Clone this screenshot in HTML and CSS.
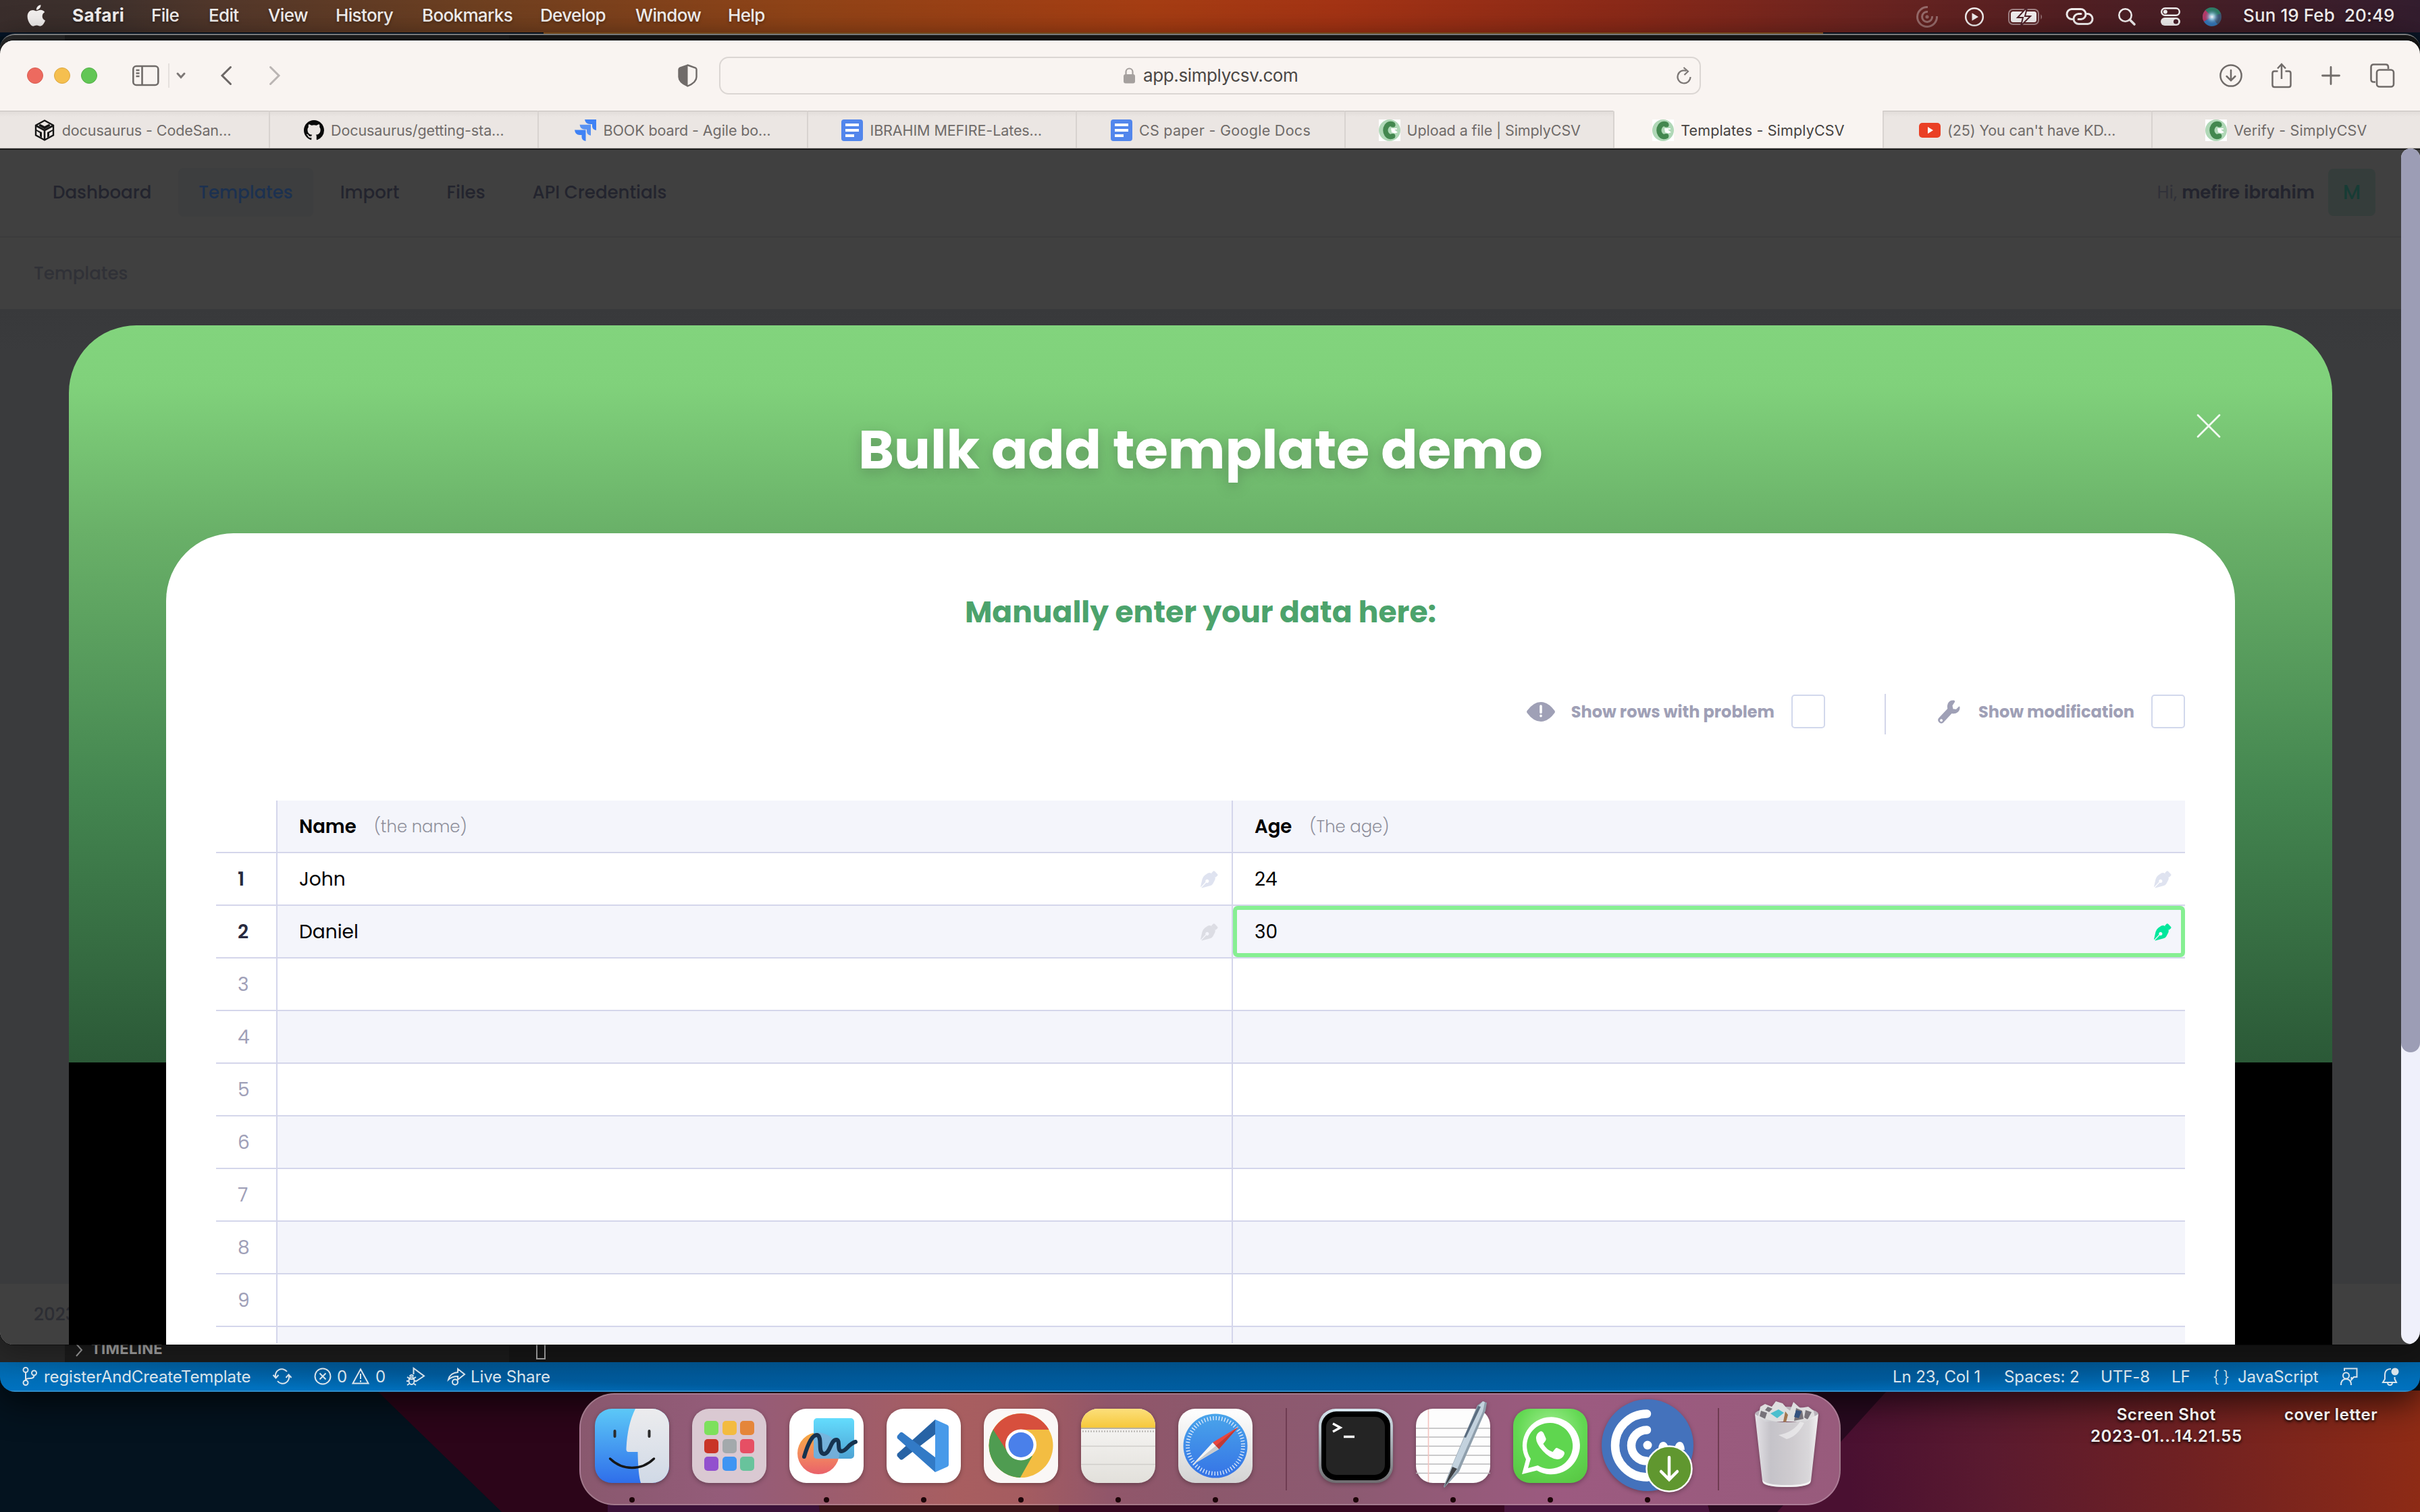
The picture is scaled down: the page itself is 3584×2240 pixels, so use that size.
FILE: index.html
```html
<!DOCTYPE html>
<html lang="en">
<head>
<meta charset="utf-8">
<title>Templates - SimplyCSV</title>
<link rel="stylesheet" href="styles.css">
</head>
<body>
<svg class="defs" aria-hidden="true">
  <defs>
    <symbol id="pen" viewBox="0 0 26 26"><path fill="currentColor" fill-rule="evenodd" d="M0 23.600 2.500 12.500Q3.300 9 6.500 6.500L11 3.500Q14 2.400 16 4L21 9Q22.600 10.800 21.300 13.500L18.300 19.300Q17 21.700 14 22.300L2 25.500 1.400 24.900 8.500 17.600A2.600 2.600 0 1 0 7.500 16.500L.6 23.900Z"/><path fill="currentColor" d="M16.500 3 18.600.7Q19.700-.2 21 .8L25 5Q26 6.200 25 7.300L22.600 9.500Q21.500 10 20.500 9L16.500 5Q15.700 4 16.500 3Z"/></symbol>
    <symbol id="csv" viewBox="0 0 32 32"><path fill="#fff" d="M0 0h32v32H0z"/><circle cx="16" cy="16" r="16" fill="#b0d8b7"/><path d="M21.500 8A7.500 9.500 0 1 0 21.500 24" fill="none" stroke="#43884f" stroke-width="7.500"/><circle cx="21" cy="8" r="3.600" fill="#43884f"/><circle cx="21" cy="24.500" r="3.400" fill="#43884f"/><path d="M18 13h9v1.500l-4 .5 5 4-4 1.500-5-1.500z" fill="#fff"/></symbol>
    <symbol id="gdoc" viewBox="0 0 32 32"><rect width="32" height="32" rx="4" fill="#5286ec"/><path fill="#fff" d="M6 6h20v4H6zM6 14h20v4H6zM6 22h13v4H6z"/></symbol>
    <linearGradient id="lav" x2="0" y2="1"><stop stop-color="#5cc8f7"/><stop offset="1" stop-color="#2f6eea"/></linearGradient>
    <linearGradient id="silver" x2="0" y2="1"><stop stop-color="#ececee"/><stop offset="1" stop-color="#d0d9e6"/></linearGradient>
    <linearGradient id="ff1" x2="0" y2="1"><stop stop-color="#63dcfd"/><stop offset="1" stop-color="#4ea3d4"/></linearGradient>
    <linearGradient id="ff2" x2="0" y2="1"><stop stop-color="#f7ab3f"/><stop offset=".5" stop-color="#f38b5e"/><stop offset="1" stop-color="#e9616a"/></linearGradient>
    <linearGradient id="yel" x2="0" y2="1"><stop stop-color="#fcdf7b"/><stop offset="1" stop-color="#f6c83b"/></linearGradient>
    <linearGradient id="paper" x2="0" y2="1"><stop stop-color="#fbfaf9"/><stop offset="1" stop-color="#e2e0db"/></linearGradient>
    <linearGradient id="white" x2="0" y2="1"><stop stop-color="#fff"/><stop offset="1" stop-color="#d3d3d3"/></linearGradient>
    <linearGradient id="sea" x2="0" y2="1"><stop stop-color="#4aa5ea"/><stop offset="1" stop-color="#3573e6"/></linearGradient>
    <linearGradient id="steel" x2="0" y2="1"><stop stop-color="#d6e6ef"/><stop offset="1" stop-color="#6f6c70"/></linearGradient>
    <radialGradient id="leaf" cx=".5" cy=".3" r=".9"><stop stop-color="#a5ef94"/><stop offset=".5" stop-color="#62d852"/><stop offset="1" stop-color="#55c23f"/></radialGradient>
    <linearGradient id="bin" x2="1"><stop stop-color="#e9e9ec"/><stop offset=".25" stop-color="#c9c9ce"/><stop offset=".6" stop-color="#d3d2d5"/><stop offset=".85" stop-color="#dedee0"/><stop offset="1" stop-color="#f7f7f8"/></linearGradient>
    <radialGradient id="siri" cx=".5" cy=".5" r=".5"><stop stop-color="#fff"/><stop offset=".35" stop-color="#a9d8ee" stop-opacity=".8"/><stop offset="1" stop-color="#4270a4" stop-opacity="0"/></radialGradient>
    <linearGradient id="wpR" gradientUnits="userSpaceOnUse" x1="2740" y1="2200" x2="3584" y2="2130"><stop stop-color="#4a1031"/><stop offset=".25" stop-color="#5a1a2f"/><stop offset=".6" stop-color="#702122"/><stop offset="1" stop-color="#8e2b15"/></linearGradient>
  </defs>
</svg>

<div class="desktop">
  <svg class="wallpaper" viewBox="0 0 3584 2240">
    <rect width="3584" height="2240" fill="#04131f"/>
    <path d="M560 2062H3584V2240H743Z" fill="#2c0519"/>
    <path d="M1212 2225h356v15h-354z" fill="#3b1419"/>
    <path d="M900 2225h312l2 15H900z" fill="#3a1138"/>
    <path d="M1568 2225h660v15h-660z" fill="#35071f"/>
    <path d="M2228 2225h300l4 15h-304z" fill="#48153d"/>
    <path d="M2528 2062h270l-160 178h-106z" fill="#290a20"/>
    <path d="M2795 2060H3584V2240H2632Z" fill="url(#wpR)"/>
    <path d="M0 46h805v8H0z" fill="#051527"/>
    <path d="M805 48H2700v2H805z" fill="#8f5a22"/>
    <path d="M2700 46h884v20h-884z" fill="#0b1626"/>
  </svg>

  <header class="menubar">
    <nav class="menus">
      <svg class="apple" viewBox="0 28 376 456"><path fill="#f2efee" d="M318.700 268.700c-.2-36.700 16.400-64.400 50-84.800-18.800-26.900-47.200-41.700-84.700-44.600-35.500-2.800-74.300 20.700-88.500 20.700-15 0-49.400-19.700-76.400-19.700C63.300 141.200 4 184.800 4 273.500q0 39.300 14.400 81.200c12.800 36.700 59 126.700 107.200 125.200 25.200-.6 43-17.900 75.800-17.900 31.800 0 48.300 17.900 76.400 17.900 48.600-.7 90.400-82.500 102.600-119.300-65.200-30.700-61.700-90-61.700-91.900zm-56.600-164.200c27.300-32.400 24.800-61.900 24-72.500-24.100 1.400-52 16.400-67.900 34.900-17.500 19.800-27.800 44.300-25.600 71.900 26.100 2 49.900-11.400 69.500-34.300z"/></svg>
      <b>Safari</b><span>File</span><span>Edit</span><span>View</span><span>History</span><span>Bookmarks</span><span>Develop</span><span>Window</span><span>Help</span>
    </nav>
    <div class="extras">
      <svg width="32" height="32" viewBox="0 0 32 32" fill="none" stroke="#fff" stroke-opacity=".33" stroke-width="3"><path d="M17 1.500A14.500 14.500 0 1 0 30.500 15"/><path d="M17 8.500A7.500 7.500 0 1 0 23.500 15"/><circle cx="16" cy="16" r="1"/></svg>
      <svg width="28" height="28" viewBox="0 0 28 28"><circle cx="14" cy="14" r="12.800" fill="none" stroke="#f0eded" stroke-width="2.500"/><path d="M10.500 8.300 20 14l-9.500 5.700z" fill="#f0eded"/></svg>
      <svg width="52" height="26" viewBox="0 0 52 26"><rect x="1" y="2" width="44" height="22" rx="6" fill="none" stroke="#a08083" stroke-width="2"/><rect x="4" y="5" width="38" height="16" rx="3.500" fill="#f0eded"/><path d="M48.500 9q3 4 0 8z" fill="#a08083"/><path d="M27 0 14 14h8l-3 12 14-14h-8l3-12z" fill="#f0eded" stroke="#50222a" stroke-width="2"/></svg>
      <svg width="42" height="25" viewBox="0 0 42 25" fill="none" stroke="#f0eded" stroke-width="3" stroke-linecap="round"><path d="M10 16.500A7.500 7.500 0 0 1 9 1.500h13a7.500 7.500 0 0 1 1 15h-4"/><path d="M32 8.500a7.500 7.500 0 0 1 1 15H20a7.500 7.500 0 0 1-1-15h4"/></svg>
      <svg width="26" height="26" viewBox="0 0 26 26" fill="none" stroke="#f0eded"><circle cx="10.500" cy="10.500" r="9.200" stroke-width="2.600"/><path d="m17.500 17.500 6.500 6.500" stroke-width="3.600" stroke-linecap="round"/></svg>
      <svg width="29" height="27" viewBox="0 0 29 27"><rect x="1.200" y="1.200" width="26.600" height="10.600" rx="5.300" fill="none" stroke="#f0eded" stroke-width="2.400"/><circle cx="6.800" cy="6.500" r="3" fill="#f0eded"/><rect y="15" width="29" height="12" rx="6" fill="#f0eded"/><circle cx="22.500" cy="21" r="3.600" fill="#48202a"/></svg>
      <svg width="28" height="28" viewBox="0 0 28 28"><circle cx="14" cy="14" r="14" fill="#3e5673"/><path d="M14 0A14 14 0 0 1 27 9L14 14 4 4Q8 0 14 0z" fill="#2f7d65"/><path d="M4 4Q-3 12 2 21l12-7z" fill="#b93a68"/><path d="M2 21q8 11 20 4l-8-11z" fill="#3577ba"/><circle cx="14" cy="14" r="11" fill="url(#siri)"/></svg>
      <span class="clock">Sun 19 Feb&nbsp; 20:49</span>
    </div>
  </header>

  <section class="editor">
    <div class="editor-body">
      <div class="activity"></div>
      <div class="sidebar"><svg width="12" height="20" viewBox="0 0 12 20"><path d="m2 1 8 9-8 9" fill="none" stroke="#9a9a9a" stroke-width="2"/></svg><b>TIMELINE</b></div>
      <div class="code"><i class="caret"></i></div>
    </div>
    <footer class="statusbar">
      <svg width="22" height="28" viewBox="0 0 22 28" fill="none" stroke="#dce6ed" stroke-width="2"><circle cx="5" cy="4.500" r="3.500"/><circle cx="5" cy="23.500" r="3.500"/><circle cx="17.500" cy="9" r="3.500"/><path d="M5 8v12M17.500 12.500q0 4.500-6 4.500Q5 17 5 20"/></svg>
      <span>registerAndCreateTemplate</span>
      <svg width="28" height="24" viewBox="0 0 28 24" fill="none" stroke="#dce6ed" stroke-width="2"><path d="M4.500 14A9.500 9.500 0 0 1 21 5M23.500 10A9.500 9.500 0 0 1 7 19M.5 10l4 4.500 4-4.500M19.500 14l4-4.500 4 4.500"/></svg>
      <svg width="26" height="26" viewBox="0 0 26 26" fill="none" stroke="#dce6ed" stroke-width="2"><circle cx="13" cy="13" r="11.500"/><path d="m8.500 8.500 9 9m0-9-9 9"/></svg>
      <span>0</span>
      <svg width="26" height="26" viewBox="0 0 26 26" fill="none" stroke="#dce6ed" stroke-width="2"><path d="M13 2.500 24.500 23.500h-23zM13 9v8M13 19v2.500"/></svg>
      <span>0</span>
      <svg width="28" height="28" viewBox="0 0 28 28" fill="none" stroke="#dce6ed" stroke-width="2"><path d="M10.500 11V2L26 13.500 14 21.500"/><ellipse cx="7.500" cy="20.500" rx="4" ry="5.500"/><path d="M1 15l3 2M14 15l-3 2M0 21h3M12 21h3M1 27l3-2M14 27l-3-2M4 18h7M4.500 14q3-4 6 0"/></svg>
      <svg width="28" height="28" viewBox="0 0 28 28" fill="none" stroke="#dce6ed" stroke-width="2"><path d="M16 3v5Q4 9 2 19q5-5 14-5v5l10-8z"/><circle cx="12" cy="22.500" r="4"/></svg>
      <span>Live Share</span>
      <span>Ln 23, Col 1</span><span>Spaces: 2</span><span>UTF-8</span><span>LF</span><span class="braces">{}</span><span>JavaScript</span>
      <svg width="26" height="27" viewBox="0 0 26 27" fill="none" stroke="#dce6ed" stroke-width="2"><circle cx="8.500" cy="12" r="4.500"/><path d="M1 26q0-9 7.500-9T16 26M6 5V1.500h18.500v12.500H20l-3.500 4V14"/></svg>
      <svg width="25" height="27" viewBox="0 0 25 27" fill="none" stroke="#dce6ed" stroke-width="2"><path d="M13 2Q4 2 4 11v6l-3 5h20l-2.500-5v-3M8 22q0 4 3.500 4t3.500-4"/><circle cx="19" cy="6" r="5.500" fill="#dce6ed" stroke="none"/></svg>
    </footer>
  </section>

  <main class="browser">
    <div class="toolbar">
      <div class="lights"><i></i><i></i><i></i></div>
      <svg width="40" height="32" viewBox="0 0 40 32" fill="none" stroke="#706b69" stroke-width="2.600"><rect x="1.300" y="2" width="37" height="28" rx="4.500"/><path d="M14.500 2v28M5.500 8h5M5.500 12.500h5M5.500 17h5" /></svg>
      <i class="bar"></i>
      <svg width="14" height="10" viewBox="0 0 14 10" fill="none" stroke="#7d7876" stroke-width="3" stroke-linecap="round"><path d="m2 2 5 5.500L12 2"/></svg>
      <svg width="18" height="30" viewBox="0 0 18 30" fill="none" stroke="#6b6664" stroke-width="3" stroke-linecap="round"><path d="M14.500 2.500 2 15l12.500 12.500"/></svg>
      <svg width="18" height="30" viewBox="0 0 18 30" fill="none" stroke="#bab5b3" stroke-width="3" stroke-linecap="round"><path d="M1.500 2.500 14 15 1.500 27.500"/></svg>
      <svg width="29" height="34" viewBox="0 0 29 34"><path d="M14.500 1.500 26 5.500q1.500.7 1.500 2.500v11q0 8-13 13.500Q1.500 27 1.500 19V8q0-1.800 1.500-2.500z" fill="none" stroke="#706b69" stroke-width="2.400"/><path d="M14.500 1.500V32.500Q1.500 27 1.500 19V8q0-1.800 1.500-2.500z" fill="#706b69"/></svg>
      <div class="address">
        <div class="url"><svg width="17" height="24" viewBox="0 0 17 24"><path d="M3.500 11V6.500a5 5 0 0 1 10 0V11" fill="none" stroke="#a5a09e" stroke-width="2.200"/><rect y="10" width="17" height="13.500" rx="3" fill="#a5a09e"/></svg><span>app.simplycsv.com</span></div>
        <svg width="22" height="26" viewBox="0 0 22 26" fill="none" stroke="#7d7876" stroke-width="2.200"><path d="M14.500 6A9.500 9.500 0 1 0 20.500 15"/><path d="m10.500 1 6.500 5.700L11.500 12"/></svg>
      </div>
      <svg width="34" height="34" viewBox="0 0 34 34" fill="none" stroke="#706b69" stroke-width="2.500"><circle cx="17" cy="17" r="15.600"/><path d="M17 9v15m-6.300-6 6.300 6.300 6.300-6.300" stroke-linecap="round"/></svg>
      <svg width="30" height="38" viewBox="0 0 30 38" fill="none" stroke="#706b69" stroke-width="2.500"><path d="M9.500 12.500H4.500Q1.500 12.500 1.500 15.500V33q0 3 3 3h21q3 0 3-3V15.500q0-3-3-3h-5"/><path d="M15 24V2m-6 6.500L15 2l6 6.500"/></svg>
      <svg width="28" height="28" viewBox="0 0 28 28" fill="none" stroke="#706b69" stroke-width="2.800" stroke-linecap="round"><path d="M14 1.500v25M1.500 14h25"/></svg>
      <svg width="37" height="36" viewBox="0 0 37 36" fill="none" stroke="#706b69" stroke-width="2.600"><rect x="10" y="9.500" width="25" height="25" rx="4"/><path d="M8 27.500H5.500q-4 0-4-4V5.500q0-4 4-4H23q4 0 4 4V8"/></svg>
    </div>

    <div class="tabs">
      <div class="tab"><svg width="32" height="32" viewBox="0 0 32 32"><path d="M16 1.500 29 8.700v14.600L16 30.500 3 23.300V8.700z" fill="none" stroke="#151515" stroke-width="2.400"/><path d="M4 9.500 16 16v14M28 9.500 16 16" fill="none" stroke="#151515" stroke-width="2.600"/><path d="M9 6.500 16 10l7-3.500 1.500 3L16 14.500 7.500 9.500zM4 15l8 4v8l-3-2v-5l-5-3zM28 15l-8 4v8l3-2v-5l5-3z" fill="#151515"/></svg><span>docusaurus - CodeSan…</span></div>
      <div class="tab"><svg width="30" height="30" viewBox="0 0 16 16"><path fill="#0a0a0a" d="M8 0C3.580 0 0 3.580 0 8c0 3.540 2.290 6.530 5.470 7.590.4.070.55-.17.55-.38 0-.19-.01-.82-.01-1.490-2.010.37-2.530-.49-2.690-.94-.09-.23-.48-.94-.82-1.130-.28-.15-.68-.52-.01-.53.63-.01 1.080.58 1.230.82.72 1.210 1.870.87 2.330.66.07-.52.28-.87.51-1.070-1.780-.2-3.640-.89-3.640-3.950 0-.87.31-1.590.82-2.150-.08-.2-.36-1.020.08-2.120 0 0 .67-.21 2.200.82.64-.18 1.320-.27 2-.27s1.360.09 2 .27c1.530-1.040 2.200-.82 2.200-.82.44 1.100.16 1.920.08 2.120.51.56.82 1.270.82 2.150 0 3.070-1.870 3.750-3.650 3.950.29.25.54.73.54 1.480 0 1.070-.01 1.930-.01 2.200 0 .21.15.46.55.38A8.010 8.010 0 0 0 16 8c0-4.420-3.580-8-8-8z"/></svg><span>Docusaurus/getting-sta…</span></div>
      <div class="tab"><svg width="32" height="32" viewBox="0 0 32 32" fill="#3f82f5"><path d="M15 0h17v16q-6-1-6-6V7h-3q-7 0-8-7z"/><path d="M7.500 7.700h16.500v16q-6-1-6-6v-3h-3q-6.500 0-7.500-7z" opacity=".85"/><path d="M0 15.500h16.500V32q-6-1-6-6v-3h-3Q1 23 0 15.500z"/></svg><span>BOOK board - Agile bo…</span></div>
      <div class="tab"><svg width="32" height="32"><use href="#gdoc"/></svg><span>IBRAHIM MEFIRE-Lates…</span></div>
      <div class="tab"><svg width="32" height="32"><use href="#gdoc"/></svg><span class="t-wide">CS paper - Google Docs</span></div>
      <div class="tab"><svg width="32" height="32"><use href="#csv"/></svg><span>Upload a file | SimplyCSV</span></div>
      <div class="tab active"><svg width="32" height="32"><use href="#csv"/></svg><span class="t-mid">Templates - SimplyCSV</span></div>
      <div class="tab"><svg width="32" height="32" viewBox="0 0 32 32"><rect y="5" width="32" height="22" rx="5" fill="#ea4025"/><path d="m13 11 8 5-8 5z" fill="#fff"/></svg><span>(25) You can't have KD…</span></div>
      <div class="tab"><svg width="32" height="32"><use href="#csv"/></svg><span class="t-mid">Verify - SimplyCSV</span></div>
    </div>

    <div class="page">
      <header class="topnav">
        <a>Dashboard</a><a class="on">Templates</a><a>Import</a><a>Files</a><a>API Credentials</a>
        <div class="user"><span class="hi">Hi,</span><b>mefire ibrahim</b><i>M</i></div>
      </header>
      <div class="crumb">Templates</div>
      <div class="page-fill"></div>
      <footer class="pagefoot">2023©</footer>

      <section class="modal">
        <svg class="close" viewBox="0 0 36 36"><path d="M2 2l32 32M34 2 2 34" stroke="#fff" stroke-opacity=".9" stroke-width="2.800" stroke-linecap="round"/></svg>
        <h1>Bulk add template demo</h1>
        <div class="panel">
          <h2>Manually enter your data here:</h2>
          <div class="filters">
            <svg width="42" height="29" viewBox="0 0 42 29"><path d="M.5 16Q-.3 14.500.5 13 10 0 21 0t20.500 13q.8 1.500 0 3Q32 29 21 29T.5 16z" fill="#9fa0b6"/><path d="M21 6v9.500M21 20.300v.4" stroke="#fff" stroke-width="3.600" stroke-linecap="round"/></svg>
            <label class="f-problem">Show rows with problem</label><i class="check"></i>
            <i class="rule"></i>
            <svg class="wrench" width="33" height="35" viewBox="0 0 33 35"><path fill="#9fa0b6" fill-rule="evenodd" d="M24 .6Q17.500-.6 14.700 5.500 13.200 9 14.200 13L1.500 26.500a4.800 4.800 0 0 0 6.500 7L20.500 20Q26 21 29.500 18q3.300-3 3-7.500-.5-1.500-1.700-.6L27 13.700l-4.500-.5-1-5L25 3q.6-1.600-1-2.400zM5 28.200a2 2 0 1 0 .1 0z"/></svg>
            <label class="f-mod">Show modification</label><i class="check"></i>
          </div>
          <div class="sheet">
            <div class="row head"><span class="num"></span><div class="cell"><b>Name</b><em>(the name)</em></div><div class="cell"><b>Age</b><em>(The age)</em></div></div>
            <div class="row"><span class="num filled">1</span><div class="cell">John<svg class="pen"><use href="#pen"/></svg></div><div class="cell">24<svg class="pen"><use href="#pen"/></svg></div></div>
            <div class="row"><span class="num filled">2</span><div class="cell">Daniel<svg class="pen dim"><use href="#pen"/></svg></div><div class="cell selected">30<svg class="pen"><use href="#pen"/></svg></div></div>
            <div class="row"><span class="num">3</span><div class="cell"></div><div class="cell"></div></div>
            <div class="row"><span class="num">4</span><div class="cell"></div><div class="cell"></div></div>
            <div class="row"><span class="num">5</span><div class="cell"></div><div class="cell"></div></div>
            <div class="row"><span class="num">6</span><div class="cell"></div><div class="cell"></div></div>
            <div class="row"><span class="num">7</span><div class="cell"></div><div class="cell"></div></div>
            <div class="row"><span class="num">8</span><div class="cell"></div><div class="cell"></div></div>
            <div class="row"><span class="num">9</span><div class="cell"></div><div class="cell"></div></div>
            <div class="row"><span class="num"></span><div class="cell"></div><div class="cell"></div></div>
          </div>
        </div>
      </section>
      <div class="scroll"><i></i></div>
    </div>
  </main>

  <div class="file shot">Screen Shot<br>2023-01...14.21.55</div>
  <div class="file letter">cover letter</div>

  <footer class="dock">
    <div class="app run"><svg viewBox="0 0 110 110"><rect width="110" height="110" rx="25" fill="url(#lav)"/><path d="M60 0H85a25 25 0 0 1 25 25V85a25 25 0 0 1-25 25H68Q64 98 63.500 64H50q-4 0-3.500-5Q48 24 60 0z" fill="url(#silver)"/><path d="M29.500 33v8M80.500 33v8" stroke="#2b2b2b" stroke-width="4" stroke-linecap="round"/><path d="M22.500 74q14 13.500 32.500 13.500T87.500 74" fill="none" stroke="#161616" stroke-width="3.500" stroke-linecap="round"/></svg></div>
    <div class="app"><svg viewBox="0 0 110 110"><rect width="110" height="110" rx="25" fill="#dac9d2"/><g><rect x="18" y="18" width="21" height="21" rx="5" fill="#7de05c"/><rect x="45" y="18" width="21" height="21" rx="5" fill="#f3bb40"/><rect x="71" y="18" width="21" height="21" rx="5" fill="#e5863a"/><rect x="18" y="45" width="21" height="21" rx="5" fill="#c93427"/><rect x="45" y="45" width="21" height="21" rx="5" fill="#a3a9ac"/><rect x="71" y="45" width="21" height="21" rx="5" fill="#e64f64"/><rect x="18" y="71" width="21" height="21" rx="5" fill="#9250ce"/><rect x="45" y="71" width="21" height="21" rx="5" fill="#3f95f3"/><rect x="71" y="71" width="21" height="21" rx="5" fill="#68c39c"/></g></svg></div>
    <div class="app run"><svg viewBox="0 0 110 110"><rect width="110" height="110" rx="25" fill="#fff"/><circle cx="43" cy="66" r="31" fill="url(#ff2)"/><rect x="36" y="14" width="60" height="60" rx="5" fill="url(#ff1)"/><path d="M36 36.500Q43 34 50 36.500 74 44 74 66q0 4-1 8H41q-5 0-5-5z" fill="#7fb0d8" opacity=".75"/><path d="M22 71C28 50 35 38 41 39c9 2 0 27 10 28 10 0 10-22 19-21 6 1 0 16 7 17 8 0 10-11 21-14" fill="none" stroke="#16334f" stroke-width="6" stroke-linecap="round"/></svg></div>
    <div class="app run"><svg viewBox="0 0 110 110"><rect width="110" height="110" rx="25" fill="#fff"/><path d="M72 16v22L24 75q-2 1.500-4 0l-4-4.500q-1-2 0-4z" fill="#2763a5"/><path d="M72 94V72L24 35.500q-2-1.500-4 0L16 40q-1 2 0 4z" fill="#327ac6"/><path d="M72 16 90 24q2 1 2 3v56q0 2-2 3L72 94z" fill="#489ae9"/></svg></div>
    <div class="app run"><svg viewBox="0 0 110 110"><rect width="110" height="110" rx="25" fill="#faf7f6"/><circle cx="55" cy="54.500" r="47.500" fill="#f3bd42"/><path d="M55 54.500 14.500 30A47.500 47.500 0 0 0 54 102z" fill="#4f9c51"/><path d="M35 66 14 31a47.500 47.500 0 0 0 40 71l18-32z" fill="#4f9c51"/><path d="M14 31a47.500 47.500 0 0 1 82.500 0H55L33 61z" fill="#d74f3d"/><circle cx="55" cy="53.500" r="23" fill="#fff"/><circle cx="55" cy="53.500" r="18.500" fill="#4a80ea"/></svg></div>
    <div class="app run"><svg viewBox="0 0 110 110"><rect width="110" height="110" rx="25" fill="url(#paper)"/><path d="M0 28V25A25 25 0 0 1 25 0H85a25 25 0 0 1 25 25v3z" fill="url(#yel)"/><path d="M0 29h110" stroke="#b7b09f" stroke-width="2"/><path d="M2 33.500h106" stroke="#bcbab6" stroke-width="2.500" stroke-dasharray="2 2"/><path d="M0 55.500h110M0 82.500h110" stroke="#d0ceca" stroke-width="1.500"/></svg></div>
    <div class="app run"><svg viewBox="0 0 110 110"><rect width="110" height="110" rx="25" fill="url(#white)"/><circle cx="55" cy="55" r="47.500" fill="url(#sea)"/><circle cx="55" cy="55" r="41" fill="none" stroke="#e4eefb" stroke-width="6" stroke-dasharray="1.300 3"/><path d="M89 27 60 60 51 50z" fill="#e8463f"/><path d="M89 27 60 60 55.500 55z" fill="#bf3a36"/><path d="M21 83 51 50l9 10z" fill="#f4f4f4"/><path d="M21 83 55.500 55l4.500 5z" fill="#c9cbce"/></svg></div>
    <i class="sep"></i>
    <div class="app run"><svg viewBox="0 0 110 110"><rect width="110" height="110" rx="25" fill="url(#steel)"/><rect x="4" y="4" width="102" height="102" rx="22" fill="#000"/><rect x="11" y="12" width="87" height="86" rx="15" fill="#242424"/><path d="m21 22 11 6-11 6M37 41.500h16" fill="none" stroke="#fff" stroke-width="3.400"/></svg></div>
    <div class="app run"><svg viewBox="0 0 110 110"><rect width="110" height="110" rx="25" fill="#fdfdfd"/><path d="M0 29h110M0 42h110M0 55.500h110M0 69h110M0 82h110M0 95.500h110" stroke="#b9b9bb" stroke-width="1.600"/><path d="M18.500 1v108" stroke="#f3c3c0" stroke-width="1.600"/><path d="m99-11 6 2-2 12-39 90-22 24-1-2 12-30 38-90z" fill="#8f9fac"/><path d="m99-11 3 1-3 14-39 88-17 22 10-28 38-88z" fill="#c3d2de"/><path d="m92-4 4 1-22 46-3-1z" fill="#5b6d80"/><path d="m54 86 7 3-19 27z" fill="#3f4246"/></svg></div>
    <div class="app run"><svg viewBox="0 0 110 110"><rect width="110" height="110" rx="25" fill="url(#leaf)"/><path d="M13 97l6-22a42.500 42.500 0 1 1 16 16.500z" fill="#fff"/><path d="M22 88l4-14a34 34 0 1 1 10.500 10z" fill="#5fd64f"/><path d="M38 35q4-4 7 1l3.500 8q.5 2-1 4l-3 4q5 9 14 12l4-5q1.500-1.500 3.500-.5l8 4q3 2 1.500 5.500-2.500 6.500-10 7Q54 74 43.500 62 33 50 34 42q1-5 4-7z" fill="#fff"/></svg></div>
    <div class="app run"><svg class="big" viewBox="0 0 136 136"><circle cx="68" cy="67" r="68" fill="#4472bc"/><g fill="none" stroke="#fff" stroke-linecap="round"><path d="M67 20.500a47 47 0 1 0 0 94" stroke-width="12.500"/><path d="M67 44.500a23 23 0 1 0 0 46" stroke-width="12.500"/></g><circle cx="68" cy="67" r="6.500" fill="#fff"/><path d="M84 72q1-10 7-10t8 9h9q2-9 8-9t7 12z" fill="#fff"/><circle cx="100" cy="102" r="33.500" fill="#60972f" stroke="#fff" stroke-width="2.500"/><path d="M100 85v33M88 106l12 12 12-12" fill="none" stroke="#fff" stroke-width="4.500" stroke-linecap="round"/></svg></div>
    <i class="sep"></i>
    <div class="app"><svg class="bin" viewBox="0 0 96 128"><ellipse cx="48" cy="19" rx="47" ry="11" fill="#b9b3bb"/><path d="M6 22 9 8 16 4 26 8 32 0 42 3 48 10 53 14 58 1 68 10 80 8 88 14 90 24 76 30 16 30z" fill="#dededf"/><path d="M10 14l9 3-3 9-8-4zM20 8l7 3-5 5-6-3zM62 10l9 4 2 12-14 3zM76 13l9 3-6 11-5-3z" fill="#77737a"/><path d="M24 18l12-6 8 5-10 8z" fill="#4cbfce"/><path d="M62 13l8 2-4 10-7-2z" fill="#33517f"/><path d="M46 15l4 5-3 11-4-1z" fill="#a2764e"/><path d="M1 19Q20 31 48 31t47-12L84 118q-2 9-36 9t-36-9z" fill="url(#bin)" opacity=".96"/><path d="M36 50Q58 46 68 30l6 2Q64 52 48 56z" fill="#f3f3f5" opacity=".6"/><path d="M12 116q4 8 36 8t36-8l-1 5q-6 6-35 6t-35-6z" fill="#fff" opacity=".7"/></svg></div>
  </footer>
</div>
</body>
</html>
```
FILE: styles.css
```css
* { box-sizing: border-box; }
body { margin: 0; overflow: hidden; font-family: "Inter", "Liberation Sans", sans-serif; }
i, em { font-style: normal; }
svg { display: block; overflow: visible; }
.defs { position: absolute; width: 0; height: 0; }

.desktop { position: relative; width: 3584px; height: 2240px; overflow: hidden; background: #04131f; }
.wallpaper { position: absolute; inset: 0; width: 3584px; height: 2240px; }

/* menu bar */
.menubar {
  position: absolute; top: 0; left: 0; width: 3584px; height: 48px; padding: 0 0 3px 40px;
  display: flex; justify-content: space-between; align-items: center;
  font-size: 26px; font-weight: 500; color: #f2efee; text-shadow: 0 2px 4px rgba(0,0,0,.35);
  background: linear-gradient(90deg, #3a2e2c 0, #3d302c 150px, #52372a 330px, #6d3f20 700px, #8f4317 1180px, #a53d13 1700px, #a33314 1980px, #8a2918 2400px, #6c2420 2750px, #521f22 3050px, #401e28 3350px, #331d2e 3584px);
}
.menus { display: grid; grid-template-columns: 67px 117px 85px 88px 100px 128px 175px 141px 137px 70px; align-items: center; white-space: nowrap; letter-spacing: -.65px; }
.menus b { letter-spacing: .4px; }
.apple { width: 27px; height: 32px; }
.extras { display: grid; grid-template-columns: 72px 64px 85px 78px 63px 62px 60px 262px; align-items: center; white-space: nowrap; }
.extras svg { transform: translateY(2px); }
.clock { letter-spacing: .1px; }

/* editor window behind the browser */
.editor { position: absolute; top: 50px; left: 0; width: 3584px; height: 2012px; display: flex; flex-direction: column; background: #2d2d2d; border-radius: 22px; border-top: 2px solid #7f8182; overflow: hidden; box-shadow: 0 16px 50px rgba(0,0,0,.65); }
.editor-body { flex: 1; display: grid; grid-template-columns: 96px 658px 1fr; }
.activity { background: #272727; }
.sidebar { background: #1b1b1b; display: flex; align-items: flex-end; gap: 12px; padding: 0 0 8px 15px; font-size: 22px; line-height: 24px; color: #a0a0a0; letter-spacing: .3px; }
.code { background: #151515; display: flex; align-items: flex-end; padding: 0 0 4px 40px; }
.caret { width: 14px; height: 40px; border: 2px solid #a2a2a2; }
.statusbar {
  height: 44px; padding-left: 33px; display: grid; align-items: center; white-space: nowrap;
  grid-template-columns: 32px 339px 61px 34px 22px 35px 46px 60px 35px 2106px 165px 143px 105px 61px 37px 152px 62px 54px;
  font-size: 24px; color: #dce6ed; letter-spacing: -.1px; border-bottom: 2px solid #2f8cc9;
  background: radial-gradient(ellipse 1792px 60px at 50% 0, rgba(0,40,80,.28) 70%, transparent 100%), linear-gradient(#0066a9, #0072c0);
}
.braces { letter-spacing: 5px; font-weight: 300; }

/* browser window */
.browser { position: absolute; top: 60px; left: 0; width: 3584px; height: 1932px; display: flex; flex-direction: column; border-radius: 20px; overflow: hidden; background: #f9f4f1; box-shadow: 0 0 0 1px rgba(0,0,0,.5), 0 10px 40px rgba(0,0,0,.3); }
.toolbar { height: 104px; flex: none; display: grid; align-items: center; padding: 0 0 3px 40px; border-top: 2px solid #fff; grid-template-columns: 156px 53px 12px 66px 72px 605px 61px 2222px 77px 74px 72px 74px; }
.lights { display: flex; gap: 16px; }
.lights i { width: 24px; height: 24px; border-radius: 50%; background: #ed6a5f; border: 1px solid #d85d52; }
.lights i:nth-child(2) { background: #f5bf4f; border-color: #dca73f; }
.lights i:nth-child(3) { background: #62c655; border-color: #54ae48; }
.bar { width: 2px; height: 36px; background: #e5e0dd; }
.address { width: 1454px; height: 56px; border: 2px solid #dbd6d3; border-radius: 14px; display: flex; justify-content: space-between; align-items: center; padding: 0 12px 0 597px; font-size: 26px; letter-spacing: -.38px; color: #4a4745; }
.url { display: flex; align-items: center; gap: 12px; }
.tabs { height: 56px; flex: none; display: grid; grid-template-columns: repeat(9, 1fr); border-bottom: 1px solid #b8b3b1; }
.tab { display: flex; align-items: center; justify-content: center; gap: 10px; font-size: 21.5px; letter-spacing: -.1px; white-space: nowrap; color: #6f6b69; background: linear-gradient(#e1dcd9 0, #ebe6e3 8px); border-top: 1px solid #c5c0bd; border-left: 2px solid #d8d3d0; padding-top: 1px; }
.tab.active { background: #f9f4f1; border-top-color: #f9f4f1; color: #454240; }
.tab:first-child { border-left: 0; padding-right: 6px; }
.t-wide { letter-spacing: .3px; }
.t-mid { letter-spacing: .15px; }

/* application page, dimmed by the modal backdrop */
.page { position: relative; flex: 1; display: flex; flex-direction: column; background: #3a3b3d; font-family: "Poppins", "Inter", sans-serif; color: #23242e; font-size: 26px; border-top: 2px solid #1e1e1e; }
.topnav { height: 130px; background: #404040; border-bottom: 2px solid #3b3b3c; display: flex; align-items: center; padding: 0 66px 2px 48px; font-weight: 500; }
.topnav a { height: 72px; line-height: 72px; padding: 0 30px; margin-right: 10px; border-radius: 8px; }
.topnav a.on { background: #3d3e3f; color: #1c3150; }
.user { margin-left: auto; display: flex; align-items: center; }
.hi { font-weight: 400; color: #303139; margin-right: 7px; }
.user b { font-weight: 600; font-size: 26px; }
.user i { width: 70px; height: 70px; margin-left: 20px; border-radius: 8px; background: #353d3b; color: #173c35; font-size: 30px; line-height: 70px; text-align: center; font-weight: 500; }
.crumb { height: 106px; line-height: 106px; padding-left: 50px; background: #404040; color: #303137; font-weight: 500; }
.page-fill { flex: 1; background: linear-gradient(#38393b, #3a3b3d 60px); }
.pagefoot { height: 90px; line-height: 90px; padding-left: 50px; background: #404040; color: #2c2d33; font-weight: 500; }

.modal { position: absolute; left: 102px; top: 260px; width: 3352px; height: 1510px; border-radius: 100px 100px 0 0; overflow: hidden; display: flex; flex-direction: column; align-items: center; background: linear-gradient(#82d47d 0, #80d17b 90px, #69b068 308px, #448650 690px, #2b5937 1092px, #000 1092px); }
.close { position: absolute; left: 3151px; top: 131px; width: 36px; height: 36px; }
.modal h1 { margin: 124px 0 0; height: 184px; line-height: 120px; font-size: 80px; font-weight: 700; color: #fff; text-shadow: 0 6px 18px rgba(70,100,70,.4); white-space: nowrap; }
.panel { width: 3064px; flex: 1; padding: 87px 74px 0; background: #fff; border-radius: 100px 100px 0 0; }
.panel h2 { margin: 0; text-align: center; font-size: 44px; line-height: 60px; font-weight: 700; color: #4ca36c; }
.filters { margin-top: 92px; height: 50px; display: flex; justify-content: flex-end; align-items: center; font-size: 24px; font-weight: 700; color: #9fa0b6; white-space: nowrap; }
.f-problem { margin: 0 25px 0 24px; }
.check { width: 50px; height: 50px; border: 2px solid #d2d8ec; border-radius: 5px; }
.rule { width: 2px; height: 60px; margin: 8px 77px 0 88px; background: #d3d6ea; }
.f-mod { margin: 0 25px 0 27px; }
.sheet { margin-top: 107px; height: 804px; overflow: hidden; }
.row { height: 78px; display: grid; grid-template-columns: 91px 1415px 1410px; border-bottom: 2px solid #d4d6eb; font-size: 28px; line-height: 76px; color: #000; }
.num { padding: 1px 0 0 32px; line-height: 75px; color: #9fa0b8; border-right: 2px solid #d4d6eb; }
.num.filled { font-weight: 600; color: #282a3e; }
.cell { position: relative; padding: 1px 20px 0 32px; line-height: 75px; display: flex; align-items: center; justify-content: space-between; }
.cell:nth-child(2) { border-right: 2px solid #d4d6eb; }
.row:nth-child(odd) .cell { background: #f4f5fb; }
.head .cell { justify-content: flex-start; gap: 26px; }
.head b { font-size: 27.500px; font-weight: 600; }
.head em { font-size: 24.300px; font-weight: 300; color: #8f909c; }
.pen { width: 26px; height: 26px; color: #dfe3f0; }
.pen.dim { color: #dcdde4; }
.selected::before { content: ""; position: absolute; inset: 0; border: 6px solid #86ef92; border-radius: 7px; }
.selected .pen { color: #00e79c; }
.scroll { position: absolute; right: 0; top: -2px; width: 28px; height: 1771px; background: #eff0fb; border-radius: 14px; }
.scroll i { display: block; height: 1339px; border-radius: 14px; background: #9c9db5; }

/* desktop file names */
.file { position: absolute; top: 2080px; text-align: center; font-size: 24px; line-height: 32px; font-weight: 600; letter-spacing: .55px; color: #f0eeee; text-shadow: 0 2px 4px #000; white-space: nowrap; }
.shot { left: 3096px; }
.letter { left: 3383px; }

/* dock */
.dock { position: absolute; left: 858px; top: 2064px; width: 1868px; height: 166px; display: flex; gap: 34px; padding: 21px 0 0 21px; border: 2px solid rgba(255,255,255,.2); border-radius: 52px; background: linear-gradient(90deg, #89586e 0, #955c7a 12%, #9a5c70 18%, #a85e60 30%, #a55c60 35%, #91566a 42%, #8c586c 50%, #8d5a72 62%, #9c5a80 78%, #985b7c 100%); background-clip: border-box; }
.app { width: 110px; display: flex; flex-direction: column; align-items: center; }
.app svg { width: 110px; height: 110px; filter: drop-shadow(0 2px 3px rgba(0,0,0,.3)); }
.app svg.big { width: 136px; height: 136px; margin: -13px -13px -13px -13px; flex: none; }
.app svg.bin { width: 96px; height: 128px; margin: -11px 4px 0 0; }
.app.run::after { content: ""; width: 8px; height: 8px; border-radius: 50%; background: #1d0509; margin-top: 21px; flex: none; }
.sep { width: 2px; height: 122px; margin: -1px 13px 0 15px; background: #6f3c52; }
```
